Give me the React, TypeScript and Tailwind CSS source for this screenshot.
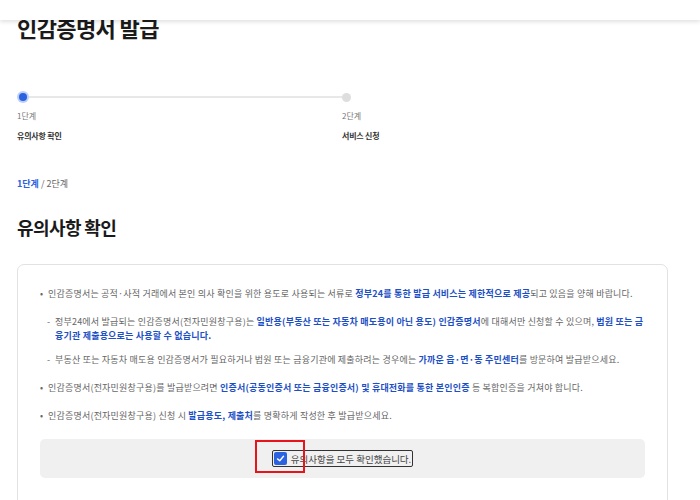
const font = { fontFamily: '"Noto Sans CJK KR", "Noto Sans", sans-serif' };

function Bullet({ children }: { children: React.ReactNode }) {
  return (
    <div className="flex">
      <span className="w-[8px] shrink-0">•</span>
      <p className="flex-1">{children}</p>
    </div>
  );
}

function Sub({ children }: { children: React.ReactNode }) {
  return (
    <div className="flex pl-[7px]">
      <span className="w-[8px] shrink-0">-</span>
      <p className="flex-1">{children}</p>
    </div>
  );
}

const B = ({ children }: { children: React.ReactNode }) => (
  <strong className="font-bold text-[#1d4fc4]">{children}</strong>
);

export default function App() {
  return (
    <div className="relative w-[700px] h-[500px] overflow-hidden bg-white text-[#222]" style={font}>
      {/* top bar */}
      <div className="absolute top-0 left-0 right-0 h-[20px] bg-white shadow-[0_2px_4px_rgba(0,0,0,0.12)] z-10" />

      <div className="pl-[17px] pt-[13px]">
        <h1 className="text-[22px] leading-[28px] font-bold tracking-[-0.6px] text-[#1a1a1a]">인감증명서 발급</h1>

        {/* stepper */}
        <div className="mt-[49px] flex">
          <div className="w-[325px]">
            <div className="flex items-center h-[14px]">
              <span className="w-[12px] h-[12px] rounded-full bg-[#bcd0f7] flex items-center justify-center shrink-0">
                <span className="w-[8px] h-[8px] rounded-full bg-[#2b62e0]" />
              </span>
              <span className="flex-1 h-[2px] bg-[#e8e8e8]" />
            </div>
            <div className="mt-[5px] text-[8px] leading-[14px] text-[#777]">1단계</div>
            <div className="mt-[6px] text-[8px] leading-[14px] font-bold text-[#333] tracking-[-0.2px]">유의사항 확인</div>
          </div>
          <div>
            <div className="flex items-center h-[14px]">
              <span className="w-[9px] h-[9px] rounded-full bg-[#dedede]" />
            </div>
            <div className="mt-[5px] text-[8px] leading-[14px] text-[#777]">2단계</div>
            <div className="mt-[6px] text-[8px] leading-[14px] font-bold text-[#333] tracking-[-0.2px]">서비스 신청</div>
          </div>
        </div>

        <div className="mt-[34px] text-[9px] leading-[14px] text-[#666]">
          <span className="font-bold text-[#2b62e0]">1단계</span> / 2단계
        </div>

        <h2 className="mt-[24px] text-[18px] leading-[24px] font-bold tracking-[-0.6px] text-[#1a1a1a]">유의사항 확인</h2>

        <div className="mt-[25px] w-[651px] h-[300px] border border-[#e2e2e2] rounded-[7px] px-[22px] pt-[22px] text-[9px] leading-[14px] text-[#666] tracking-[0.2px]">
          <Bullet>
            인감증명서는 공적·사적 거래에서 본인 의사 확인을 위한 용도로 사용되는 서류로 <B>정부24를 통한 발급 서비스는 제한적으로 제공</B>되고 있음을 양해 바랍니다.
          </Bullet>
          <div className="mt-[14px]">
            <Sub>
              정부24에서 발급되는 인감증명서(전자민원창구용)는 <B>일반용(부동산 또는 자동차 매도용이 아닌 용도) 인감증명서</B>에 대해서만 신청할 수 있으며, <B>법원 또는 금융기관 제출용으로는 사용할 수 없습니다.</B>
            </Sub>
          </div>
          <div className="mt-[10px]">
            <Sub>
              부동산 또는 자동차 매도용 인감증명서가 필요하거나 법원 또는 금융기관에 제출하려는 경우에는 <B>가까운 읍·면·동 주민센터</B>를 방문하여 발급받으세요.
            </Sub>
          </div>
          <div className="mt-[14px]">
            <Bullet>
              인감증명서(전자민원창구용)를 발급받으려면 <B>인증서(공동인증서 또는 금융인증서) 및 휴대전화를 통한 본인인증</B> 등 복합인증을 거쳐야 합니다.
            </Bullet>
          </div>
          <div className="mt-[14px]">
            <Bullet>
              인감증명서(전자민원창구용) 신청 시 <B>발급용도, 제출처</B>를 명확하게 작성한 후 발급받으세요.
            </Bullet>
          </div>

          <div className="relative mt-[16px] h-[39px] rounded-[5px] bg-[#f0f0f0] flex items-center justify-center">
            <label className="flex items-center gap-[4px] border border-[#333] rounded-[2px] px-[1px] h-[17px] text-[9.5px] text-[#444] tracking-normal">
              <span className="w-[13px] h-[13px] rounded-[2px] bg-[#2b62e0] flex items-center justify-center">
                <svg width="9" height="9" viewBox="0 0 12 12" fill="none">
                  <path d="M2 6.5 L5 9 L10 3" stroke="white" strokeWidth="1.8" strokeLinecap="round" strokeLinejoin="round" />
                </svg>
              </span>
              유의사항을 모두 확인했습니다.
            </label>
            {/* red highlight */}
            <div className="absolute left-[215px] top-[1px] w-[50px] h-[33px] border-2 border-[#e8141c]" />
          </div>
        </div>
      </div>
    </div>
  );
}
